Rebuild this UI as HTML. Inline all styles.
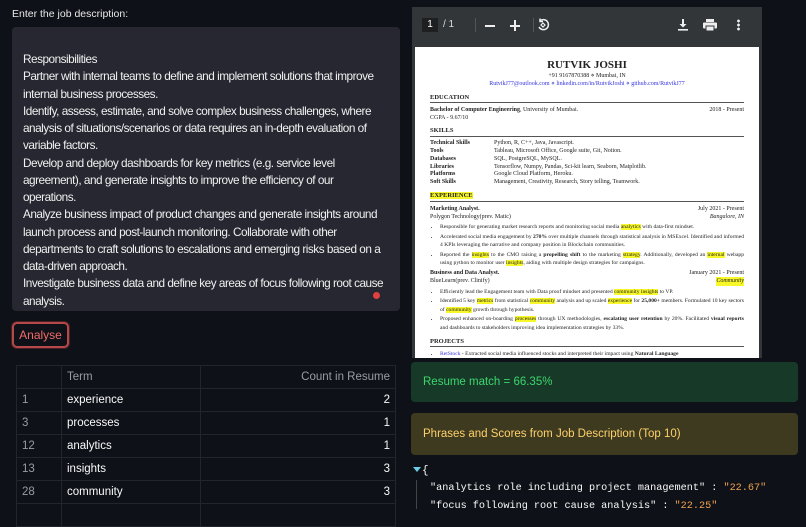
<!DOCTYPE html>
<html><head><meta charset="utf-8"><style>
*{box-sizing:border-box;margin:0;padding:0}
body{width:806px;height:509px;overflow:hidden;background:#0e1117;color:#fafafa;font-family:"Liberation Sans",sans-serif;position:relative}
.abs{position:absolute}
.ta{left:12px;top:27px;width:388px;height:284px;background:#262730;border-radius:4px;overflow:hidden;font-size:11.8px;line-height:17.25px;padding:0 11px;color:#f0f0f0;letter-spacing:-0.5px}
.ta div{white-space:nowrap}
.pv{left:412px;top:7px;width:350px;height:351px;background:#323639}
.pg{left:3px;top:40px;width:344px;height:311px;background:#fff;overflow:hidden;font-family:"Liberation Serif",serif;color:#222;font-size:6px;line-height:8.3px;padding:12px 15px}
.pg b{font-weight:bold}
.hl{background:#f7f72a}
.sec{font-weight:bold;font-size:6.5px;border-bottom:.7px solid #555;margin-top:5px;margin-bottom:3px}
.r{float:right}
ul{padding-left:10px}
li{text-align:justify;font-size:5.6px;line-height:8.6px;margin-bottom:1px}
.tbl{left:16px;top:365px;width:380px;border-collapse:collapse;font-size:11.5px}
.tbl td{border:1px solid #23252c;height:23px;padding:0 5px}
.tbl td:first-child{color:#9a9ca3;width:45px}
.tbl td:nth-child(2){width:139px}
.tbl td:nth-child(3){text-align:right}
.json{font-family:"Liberation Mono",monospace;font-size:10.2px}
</style></head><body>
<div class="abs" style="left:12px;top:8px;font-size:10.5px;color:#e8e8e8">Enter the job description:</div>
<div class="abs ta">
<div style="height:23px"></div>
<div style="margin-top:1px">Responsibilities</div>
<div>Partner with internal teams to define and implement solutions that improve</div>
<div>internal business processes.</div>
<div>Identify, assess, estimate, and solve complex business challenges, where</div>
<div>analysis of situations/scenarios or data requires an in-depth evaluation of</div>
<div>variable factors.</div>
<div>Develop and deploy dashboards for key metrics (e.g. service level</div>
<div>agreement), and generate insights to improve the efficiency of our</div>
<div>operations.</div>
<div>Analyze business impact of product changes and generate insights around</div>
<div>launch process and post-launch monitoring. Collaborate with other</div>
<div>departments to craft solutions to escalations and emerging risks based on a</div>
<div>data-driven approach.</div>
<div>Investigate business data and define key areas of focus following root cause</div>
<div>analysis.</div>
<div class="abs" style="left:361px;top:265px;width:7px;height:7px;border-radius:50%;background:#e0403f"></div>
</div>
<div class="abs pv">
 <div class="abs" style="left:10px;top:11px;width:16px;height:14px;background:#1e1f21;font-size:10px;text-align:center;line-height:14px;color:#fff">1</div>
 <div class="abs" style="left:31px;top:12px;font-size:10px;color:#ddd">/ 1</div>
 <div class="abs" style="left:63px;top:11px;width:1px;height:14px;background:#555"></div>
 <div class="abs" style="left:73px;top:18px;width:10px;height:1.5px;background:#eee"></div>
 <div class="abs" style="left:98px;top:18px;width:10px;height:1.5px;background:#eee"></div>
 <div class="abs" style="left:102.3px;top:13px;width:1.5px;height:11px;background:#eee"></div>
 <div class="abs" style="left:121px;top:11px;width:1px;height:14px;background:#555"></div>
 <svg class="abs" style="left:124px;top:11px" width="14" height="14" viewBox="0 0 14 14" fill="none" stroke="#eee" stroke-width="1.5"><path d="M4 3A5 5 0 1 1 3 9"/><path d="M4 0.5v3h3" /><path d="M7 5l2 2-2 2-2-2z" stroke-width="1.2"/></svg>
 <svg class="abs" style="left:265px;top:11px" width="12" height="13" viewBox="0 0 12 13" fill="#eee"><path d="M5 1h2v5h2.5L6 9.5 2.5 6H5z"/><rect x="1" y="11" width="10" height="1.6"/></svg>
 <svg class="abs" style="left:291px;top:12px" width="14" height="12" viewBox="0 0 14 12" fill="#eee"><rect x="3" y="0" width="8" height="3"/><rect x="0" y="3.5" width="14" height="6" rx="1"/><rect x="3" y="7" width="8" height="5" fill="#eee" stroke="#323639"/></svg>
 <div class="abs" style="left:325px;top:12px;width:3px;height:12px;background:radial-gradient(circle,#eee 1.3px,transparent 1.5px) 0 0/3px 4px"></div>
 <div class="abs pg">
  <div style="text-align:center;font-weight:bold;font-size:11px;line-height:13px">RUTVIK JOSHI</div>
  <div style="text-align:center">+91 9167870388 ⋄ Mumbai, IN</div>
  <div style="text-align:center;color:#3333dd">RutvikJ77@outlook.com ⋄ linkedin.com/in/RutvikJoshi ⋄ github.com/RutvikJ77</div>
  <div class="sec">EDUCATION</div>
  <div><b>Bachelor of Computer Engineering</b>, University of Mumbai.<span class="r">2018 - Present</span></div>
  <div>CGPA - 9.67/10</div>
  <div class="sec">SKILLS</div>
  <div style="line-height:7.9px"><b style="display:inline-block;width:64px">Technical Skills</b>Python, R, C++, Java, Javascript.</div>
  <div style="line-height:7.9px"><b style="display:inline-block;width:64px">Tools</b>Tableau, Microsoft Office, Google suite, Git, Notion.</div>
  <div style="line-height:7.9px"><b style="display:inline-block;width:64px">Databases</b>SQL, PostgreSQL, MySQL.</div>
  <div style="line-height:7.9px"><b style="display:inline-block;width:64px">Libraries</b>Tensorflow, Numpy, Pandas, Sci-kit learn, Seaborn, Matplotlib.</div>
  <div style="line-height:7.9px"><b style="display:inline-block;width:64px">Platforms</b>Google Cloud Platform, Heroku.</div>
  <div style="line-height:7.9px"><b style="display:inline-block;width:64px">Soft Skills</b>Management, Creativity, Research, Story telling, Teamwork.</div>
  <div class="sec"><span class="hl">EXPERIENCE</span></div>
  <div><b>Marketing Analyst.</b><span class="r">July 2021 - Present</span></div>
  <div style="margin-bottom:2px">Polygon Technology(prev. Matic)<i class="r">Bangalore, IN</i></div>
  <ul><li>Responsible for generating market research reports and monitoring social media <span class="hl">analytics</span> with data-first mindset.</li>
  <li>Accelerated social media engagement by <b>270%</b> over multiple channels through statistical analysis in MSExcel. Identified and informed 4 KPIs leveraging the narrative and company position in Blockchain communities.</li>
  <li>Reported the <span class="hl">insights</span> to the CMO raising a <b>propelling shift</b> to the marketing <span class="hl">strategy</span>. Additionally, developed an <span class="hl">internal</span> webapp using python to monitor user <span class="hl">insights</span>, aiding with multiple design strategies for campaigns.</li></ul>
  <div><b>Business and Data Analyst.</b><span class="r">January 2021 - Present</span></div>
  <div style="margin-bottom:2px">BlueLearn(prev. Clinify)<i class="r hl">Community</i></div>
  <ul><li>Efficiently lead the Engagement team with Data proof mindset and presented <span class="hl">community insights</span> to VP.</li>
  <li>Identified 5 key <span class="hl">metrics</span> from statistical <span class="hl">community</span> analysis and up scaled <span class="hl">experience</span> for <b>25,000+</b> members. Formulated 10 key sectors of <span class="hl">community</span> growth through hypothesis.</li>
  <li>Proposed enhanced on-boarding <span class="hl">processes</span> through UX methodologies, <b>escalating user retention</b> by 20%. Facilitated <b>visual reports</b> and dashboards to stakeholders improving idea implementation strategies by 33%.</li></ul>
  <div class="sec">PROJECTS</div>
  <ul><li><span style="color:#33d">RetStock</span> - Extracted social media influenced stocks and interpreted their impact using <b>Natural Language</b></li></ul>
 </div>
</div>
<div class="abs" style="left:12px;top:322px;width:57px;height:26px;border:2px solid #b5484a;border-radius:5px;color:#f06a6a;font-size:12px;text-align:center;line-height:22px;box-shadow:0 0 0 1px #4a1f22">Analyse</div>
<table class="abs tbl">
<tr><td></td><td style="color:#9a9ca3">Term</td><td style="color:#9a9ca3">Count in Resume</td></tr>
<tr><td>1</td><td>experience</td><td>2</td></tr>
<tr><td>3</td><td>processes</td><td>1</td></tr>
<tr><td>12</td><td>analytics</td><td>1</td></tr>
<tr><td>13</td><td>insights</td><td>3</td></tr>
<tr><td>28</td><td>community</td><td>3</td></tr>
<tr><td></td><td></td><td></td></tr>
</table>
<div class="abs" style="left:411px;top:362px;width:387px;height:40px;background:#173a28;border-radius:4px;color:#3dd56d;font-size:11.5px;line-height:40px;padding-left:12px">Resume match = 66.35%</div>
<div class="abs" style="left:411px;top:413px;width:387px;height:42px;background:#3e3a20;border-radius:4px;color:#ffd16a;font-size:11.5px;line-height:42px;padding-left:12px">Phrases and Scores from Job Description (Top 10)</div>
<div class="abs" style="left:413px;top:467px;width:0;height:0;border-left:4px solid transparent;border-right:4px solid transparent;border-top:5px solid #6ad0e8"></div>
<div class="abs json" style="left:422px;top:465px;color:#fafafa;font-size:11px">{</div>
<div class="abs" style="left:416px;top:480px;width:1px;height:29px;background:#444"></div>
<div class="abs json" style="left:430px;top:483px;white-space:pre">"analytics role including project management" : <span style="color:#f0a050">"22.67"</span></div>
<div class="abs json" style="left:430px;top:501px;white-space:pre">"focus following root cause analysis" : <span style="color:#f0a050">"22.25"</span></div>
</body></html>
